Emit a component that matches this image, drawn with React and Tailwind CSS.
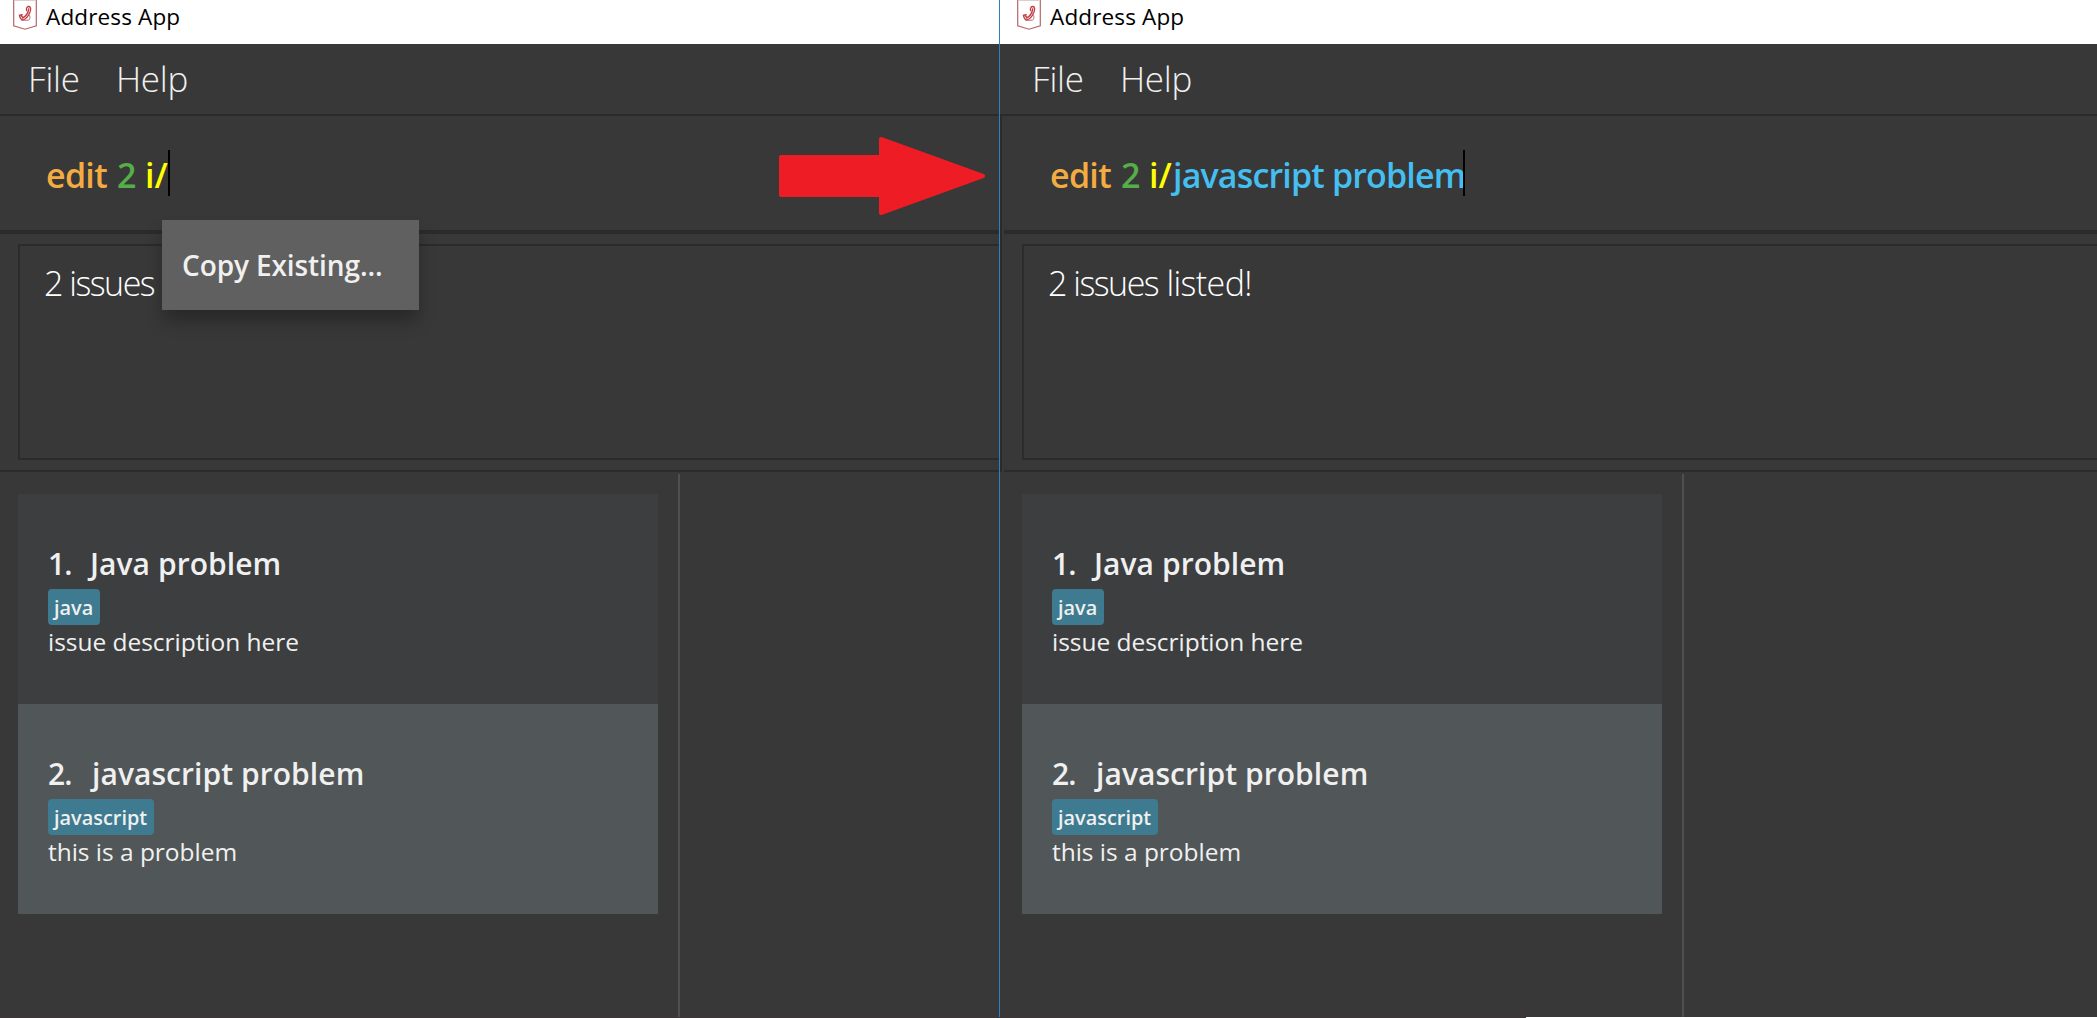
import React from "react";

function AppIcon() {
  return (
    <svg className="h-[30px] w-6 shrink-0" viewBox="0 0 24 30" fill="none">
      <path d="M0.7 0V25.8L12 29.2L23.3 25.8V0" stroke="#b5666b" strokeWidth="1.2" />
      <path d="M1.5 0.5H22.5" stroke="#dccdce" strokeWidth="1" />
      <path
        d="M13.6 11.2C12.8 8.2 14.4 6.3 16 6.5C17.9 6.9 18 9.4 17 12C15.6 15.4 12.4 19.6 9.4 20C7.6 19.4 6.8 17.4 6.4 15.2L9.8 14.6"
        stroke="#c43b42"
        strokeWidth="1.3"
      />
      <path d="M15.8 8.4C15.4 12.2 12.8 16.4 9.2 18.4M7.6 14.6L10.2 18" stroke="#c43b42" strokeWidth="1.4" />
      <path d="M14.4 13.6C17.2 14.4 17.8 18.4 15.6 20.2H8.4" stroke="#b5666b" strokeWidth="1" />
    </svg>
  );
}

function TitleBar({ inset }) {
  return (
    <div className={`flex h-11 bg-white ${inset}`}>
      <div className="flex pl-[13px]">
        <AppIcon />
        <span className="ml-[9px] pt-px text-[22.5px] leading-8 tracking-[0.15px] whitespace-nowrap text-black">
          Address App
        </span>
      </div>
    </div>
  );
}

function MenuBar({ inset }) {
  return (
    <div className={`h-[72px] border-b-2 border-[#2b2b2b] ${inset}`}>
      <div className="flex pt-px pl-7 text-[35px] leading-[68px] font-light text-[#f0f0f0]">
        <span className="w-[88px] tracking-[-0.2px]">File</span>
        <span className="tracking-[-0.3px]">Help</span>
      </div>
    </div>
  );
}

function CommandLine({ value }) {
  return (
    <div className="h-[118px] border-b-4 border-[#2b2b2b] pt-[34px]">
      <div className="flex pl-[46px] text-[34px] leading-[50px] font-semibold whitespace-nowrap">
        <span className="w-[71px] tracking-[-0.7px] text-[#f4ac42]">edit</span>
        <span className="w-7 text-[#56ae48]">2</span>
        <span className="w-6 text-[#ffff00]">i/</span>
        {value && <span className="-mr-px tracking-[-0.84px] text-[#45bff0]">{value}</span>}
        <span className="-ml-px h-[46px] w-0.5 bg-black" />
      </div>
    </div>
  );
}

function ResultBox({ children }) {
  return (
    <div className="h-[238px] border-b-2 border-[#2b2b2b] pt-2.5 pl-[18px]">
      <div className="h-[216px] border-y-2 border-l-2 border-[#2b2b2b] pt-[17px] pl-6 text-[34px] leading-[41px] font-light whitespace-pre text-white">
        {children}
      </div>
    </div>
  );
}

function IssueCard({ index, title, tag, description, color, indexWidth }) {
  return (
    <div className={`flex h-[210px] flex-col items-start pt-[49px] pl-[30px] whitespace-nowrap text-[#f0f0f0] ${color}`}>
      <div className="flex pt-px text-[30px] leading-10 font-semibold">
        <span className={`tracking-[-0.8px] ${indexWidth}`}>{index}.</span>
        <span className="tracking-[0.06px]">{title}</span>
      </div>
      <span className="mt-[5px] h-9 rounded bg-[#3e7b91] pr-[7px] pl-1.5 text-[19.9px] leading-[37px] font-semibold">
        {tag}
      </span>
      <span className="pt-px text-[24.5px] leading-8 tracking-[-0.03px]">{description}</span>
    </div>
  );
}

function IssueList({ inset }) {
  return (
    <div className={`flex flex-1 pt-0.5 ${inset}`}>
      <div className="w-[680px] border-r-2 border-[#4f4f4f] pt-5 pr-5 pl-[18px]">
        <IssueCard
          index={1}
          title="Java problem"
          tag="java"
          description="issue description here"
          color="bg-[#3c3e3f]"
          indexWidth="w-[42px]"
        />
        <IssueCard
          index={2}
          title="javascript problem"
          tag="javascript"
          description="this is a problem"
          color="bg-[#515658]"
          indexWidth="w-11"
        />
      </div>
    </div>
  );
}

function Pane({ value, result, inset = "", edge = "" }) {
  return (
    <div className="flex h-full min-w-0 flex-1 flex-col overflow-hidden">
      <TitleBar inset={inset} />
      <MenuBar inset={inset} />
      <div className={edge}>
        <CommandLine value={value} />
        <ResultBox>{result}</ResultBox>
      </div>
      <IssueList inset={inset} />
    </div>
  );
}

export default function App() {
  return (
    <div className="relative flex h-[1018px] w-[2097px] flex-col overflow-hidden bg-[#383838] font-['Open_Sans',sans-serif]">
      <div className="flex h-[1017px]">
        <div className="flex w-[1000px] border-r border-[#2b80c4]">
          <Pane result={<span className="tracking-[-1.5px]">2 issues</span>} />
        </div>
        <div className="flex w-[1097px]">
          <Pane
            value="javascript problem"
            result={
              <>
                <span className="tracking-[-1.5px]">2 issues</span>
                <span className="tracking-[-0.6px]"> listed!</span>
              </>
            }
            inset="pl-1"
            edge="border-l-2 border-[#2b2b2b] pl-0.5"
          />
        </div>
      </div>
      <div className="flex h-px bg-[#3f3539]">
        <div className="ml-auto w-[571px] bg-white" />
      </div>

      <div className="absolute top-[220px] left-[162px] h-[90px] w-[257px] bg-[#606060] pl-5 text-[28px] leading-[90px] font-semibold tracking-[-0.1px] whitespace-nowrap text-[#f0f0f0] shadow-[0_12px_16px_-1px_rgba(0,0,0,0.28)]">
        Copy Existing...
      </div>

      <svg className="absolute top-[137px] left-[779px]" width="206" height="78" viewBox="0 0 206 78">
        <path
          d="M2 20H102V2L204 39L102 76V58H2Z"
          fill="#ee1c25"
          stroke="#ee1c25"
          strokeWidth="4"
          strokeLinejoin="round"
        />
      </svg>
    </div>
  );
}
